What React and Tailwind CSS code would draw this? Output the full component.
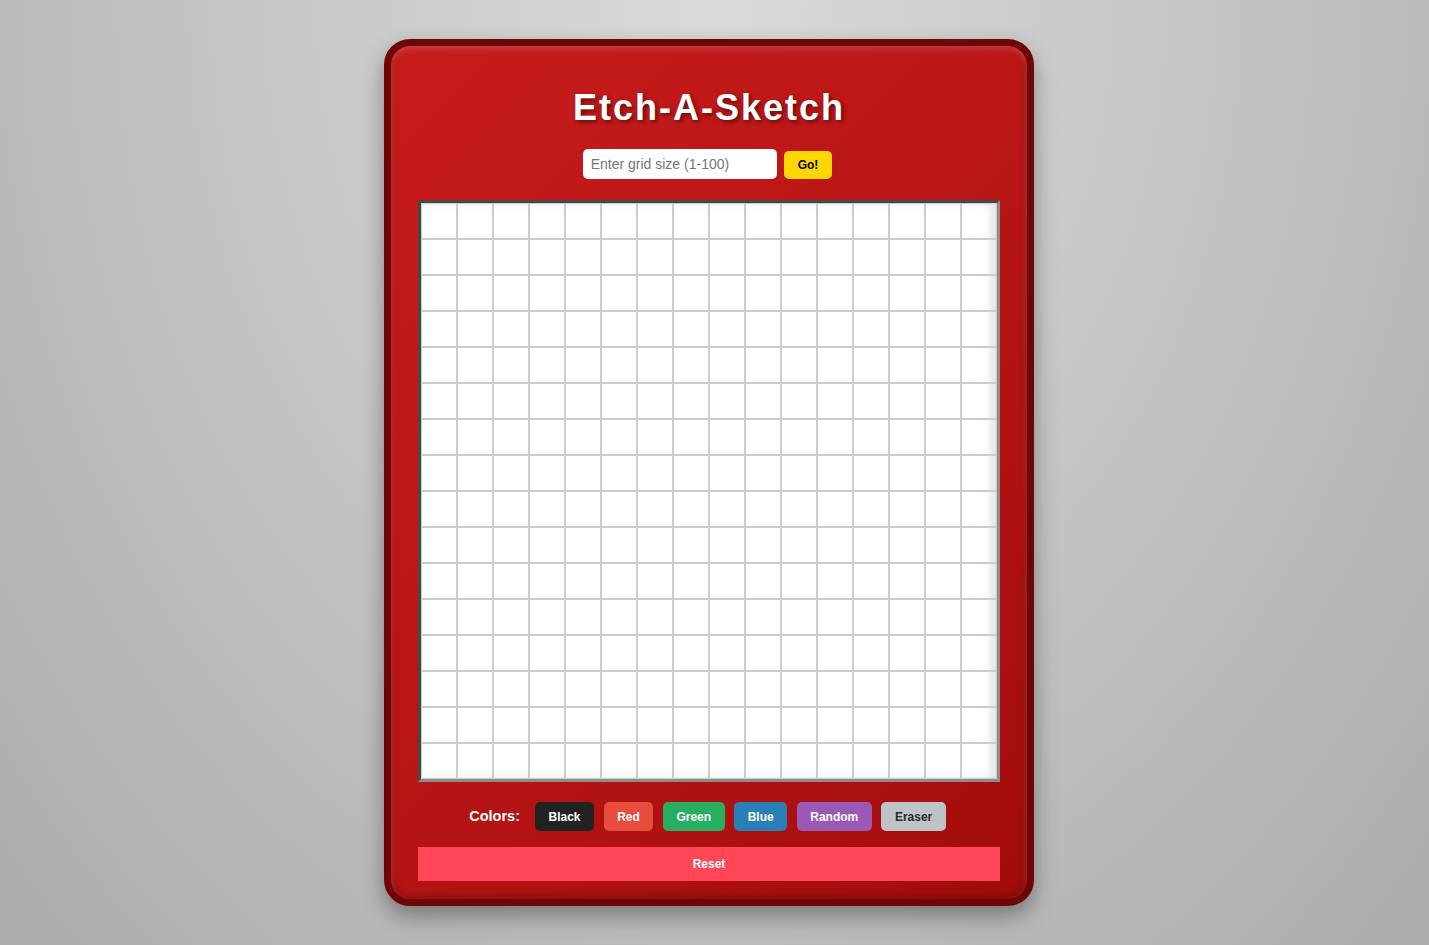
import { useState } from 'react';

const SIZE = 16;

const colors = [
  { name: 'Black', cls: 'bg-[#222222] text-white' },
  { name: 'Red', cls: 'bg-[#e74c3c] text-white' },
  { name: 'Green', cls: 'bg-[#27ae60] text-white' },
  { name: 'Blue', cls: 'bg-[#2980b9] text-white' },
  { name: 'Random', cls: 'bg-[#9b59b6] text-white' },
  { name: 'Eraser', cls: 'bg-[#bdc3c7] text-[#2c2c2c]' },
];

export default function App() {
  const [size, setSize] = useState('');
  const cells = Array.from({ length: SIZE * SIZE });

  return (
    <div className="min-h-[945px] w-full bg-[radial-gradient(ellipse_at_50%_0%,#dadada_0%,#c4c4c4_50%,#acacac_100%)] pt-[39px] pr-[11px] flex justify-center font-['Liberation_Sans',Arial,sans-serif]">
      <div className="w-[650px] h-fit rounded-[26px] border-[7px] border-[#6e0606] bg-[linear-gradient(135deg,#c81c1c_0%,#b81515_50%,#a20c0c_100%)] shadow-[0_10px_22px_rgba(0,0,0,0.35),inset_0_3px_6px_rgba(255,255,255,0.18),inset_0_-3px_8px_rgba(0,0,0,0.25)] pt-[41px] pb-[18px] px-[27px] flex flex-col items-center">
        <h1 className="text-[36px] leading-[42px] font-bold text-white tracking-[2px] [text-shadow:2px_2px_4px_rgba(0,0,0,0.5)]">
          Etch-A-Sketch
        </h1>

        <div className="mt-[20px] flex items-center gap-[7px] pr-[3px]">
          <input
            type="text"
            value={size}
            onChange={(e) => setSize(e.target.value)}
            placeholder="Enter grid size (1-100)"
            className="w-[194px] h-[30px] rounded-[5px] bg-white px-[8px] text-[14px] text-[#333] placeholder:text-[#757575] outline-none"
          />
          <button className="h-[28px] mt-[2px] px-[14px] rounded-[5px] bg-[#ffd700] text-[12px] font-bold text-black">
            Go!
          </button>
        </div>

        {/* drawing area */}
        <div className="mt-[21px] w-[582px] h-[582px] border-[3px] border-t-[#474747] border-l-[#474747] border-r-[#8c8c8c] border-b-[#8c8c8c] bg-white shadow-[inset_-6px_0_8px_rgba(0,0,0,0.12)] grid grid-cols-[repeat(16,36px)] grid-rows-[repeat(16,36px)]">
          {cells.map((_, i) => (
            <div key={i} className="border border-[#cccccc]" />
          ))}
        </div>

        <div className="mt-[20px] flex items-center pr-[3px]">
          <span className="text-[14.5px] font-bold text-white mr-[15px]">Colors:</span>
          <div className="flex gap-[9.6px]">
            {colors.map((c) => (
              <button
                key={c.name}
                className={`h-[29px] px-[13.5px] rounded-[5px] text-[12px] font-bold ${c.cls}`}
              >
                {c.name}
              </button>
            ))}
          </div>
        </div>

        <button className="mt-[16px] w-[582px] h-[34px] bg-[#ff4757] text-white text-[12px] font-bold">
          Reset
        </button>
      </div>
    </div>
  );
}
